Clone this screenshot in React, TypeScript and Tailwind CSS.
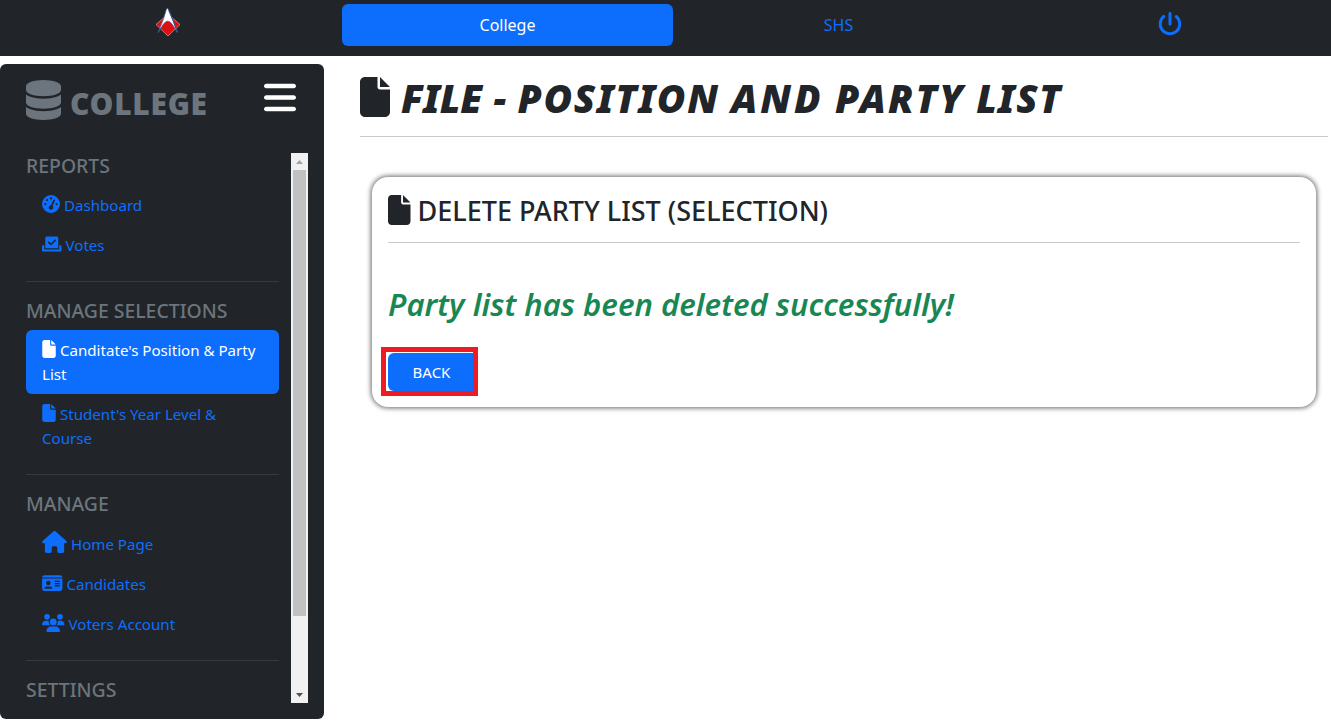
import type { ReactNode } from "react";
import {
  FaBars,
  FaCheckToSlot,
  FaDatabase,
  FaFile,
  FaGaugeHigh,
  FaHouse,
  FaIdCard,
  FaPowerOff,
  FaUsers,
} from "react-icons/fa6";

function Logo() {
  return (
    <svg viewBox="0 0 26 30" className="h-[30px] w-[26px]">
      <path d="M13 6 L25 16.500 L13 28 L1 16.500 Z" fill="#dc1010" stroke="#d9b9b9" strokeWidth="0.600" />
      <path
        d="M11.500 1 Q12.300 0 13.300 1 L18.500 13.500 L22.500 24.500 L17.500 16.500 Q12.800 9.500 8 16.500 L3.200 24.500 L8.500 11 Z"
        fill="#ffffff"
        stroke="#4a64a0"
        strokeWidth="0.600"
      />
      <path d="M13.500 1.500 L18.500 13.500 L22.500 24.500 M5.500 20 L3.200 24.500" fill="none" stroke="#33508c" strokeWidth="1.100" />
    </svg>
  );
}

function NavLink({ icon, label, active = false }: { icon: ReactNode; label: ReactNode; active?: boolean }) {
  return (
    <a
      className={
        active
          ? "block rounded-md bg-[#0d6efd] px-4 py-2 text-[15.1px] leading-6 text-white"
          : "block px-4 py-2 text-[15.1px] leading-6 text-[#0d6efd]"
      }
    >
      {icon}
      {label}
    </a>
  );
}

function Section({ title, children }: { title: string; children?: ReactNode }) {
  return (
    <section>
      <h5 className="mb-[7px] pt-px text-[19.4px] font-medium leading-6 text-[#6c757d] whitespace-nowrap">{title}</h5>
      {children}
    </section>
  );
}

function Divider() {
  return <hr className="my-4 border-t border-[#373b3f]" />;
}

function Scrollbar() {
  return (
    <div className="flex w-[17px] shrink-0 flex-col items-center bg-[#f1f1f1]">
      <div className="flex h-[17px] shrink-0 items-center">
        <svg viewBox="0 0 7 4" className="h-1 w-[7px]">
          <path d="M0 4 L3.500 0 L7 4 Z" fill="#a3a3a3" />
        </svg>
      </div>
      <div className="h-[446px] w-[13px] bg-[#c1c1c1]" />
      <div className="mt-auto flex h-[17px] shrink-0 items-center">
        <svg viewBox="0 0 7 4" className="h-1 w-[7px]">
          <path d="M0 0 L3.500 4 L7 0 Z" fill="#505050" />
        </svg>
      </div>
    </div>
  );
}

export default function App() {
  return (
    <div className="h-[728px] overflow-hidden bg-white font-['Noto_Sans',sans-serif] text-[#212529]">
      <nav className="grid h-14 grid-cols-[342px_331px_331px_327px] bg-[#212529] pt-1 text-[16px]">
        <div className="flex justify-center pr-[6px] pt-1">
          <Logo />
        </div>
        <a className="flex h-[42px] items-center justify-center rounded-md bg-[#0d6efd] text-white">College</a>
        <a className="flex h-[42px] items-center justify-center text-[#0d6efd]">SHS</a>
        <a className="flex justify-center pl-[5px] pt-2 text-[24px] text-[#0d6efd]">
          <FaPowerOff />
        </a>
      </nav>

      <div className="flex pt-2">
        <aside className="h-[655px] w-[324px] shrink-0 rounded-md bg-[#212529] pl-[26px] pr-4">
          <header className="flex h-[89px] justify-between pr-3 pt-4">
            <h1 className="flex gap-[9px] text-[#6c757d]">
              <FaDatabase className="h-10 w-[35px]" />
              <span className="pt-1 text-[30px] font-black leading-10 tracking-[0.7px]">COLLEGE</span>
            </h1>
            <FaBars className="mt-[-1px] h-[37px] w-8 text-white" />
          </header>
          <div className="flex h-[550px] gap-3 overflow-hidden">
            <div className="w-[253px] shrink-0">
              <Section title="REPORTS">
                <NavLink icon={<FaGaugeHigh className="mr-1 inline h-[18px] w-[18px] align-[-2px]" />} label="Dashboard" />
                <NavLink icon={<FaCheckToSlot className="mr-1 inline h-[18px] w-[19.500px] align-[-2px]" />} label="Votes" />
              </Section>
              <Divider />
              <Section title="MANAGE SELECTIONS">
                <NavLink
                  active
                  icon={<FaFile className="mr-1 inline h-[18px] w-3.5 align-[-2px]" />}
                  label="Canditate's Position & Party List"
                />
                <NavLink
                  icon={<FaFile className="mr-1 inline h-[18px] w-3.5 align-[-2px]" />}
                  label="Student's Year Level & Course"
                />
              </Section>
              <Divider />
              <Section title="MANAGE">
                <NavLink icon={<FaHouse className="mr-1 inline h-[22px] w-[25px] align-[-3px]" />} label="Home Page" />
                <NavLink icon={<FaIdCard className="mr-1 inline h-[18px] w-[20.500px] align-[-2px]" />} label="Candidates" />
                <NavLink icon={<FaUsers className="mr-1 inline h-[18px] w-[22.500px] align-[-2px]" />} label="Voters Account" />
              </Section>
              <Divider />
              <Section title="SETTINGS" />
            </div>
            <Scrollbar />
          </div>
        </aside>

        <main className="w-[1004px] pl-9">
          <div className="flex h-[72px] gap-[11px] pt-[13px]">
            <FaFile className="h-10 w-[30px]" />
            <h1 className="text-[39px] font-black italic leading-[41px] whitespace-nowrap [word-spacing:1px]">
              <span>FILE</span> <span>-</span> <span className="tracking-[1.7px]">POSITION</span>{" "}
              <span className="tracking-[3px]">AND</span> <span className="tracking-[2.2px]">PARTY</span>{" "}
              <span className="tracking-[1.4px]">LIST</span>
            </h1>
          </div>
          <hr className="border-t border-[#c8c9ca]" />
          <section className="ml-3 mt-10 h-[230px] w-[944px] rounded-2xl bg-white px-4 pt-4 shadow-[0_0_5px_1px_rgba(0,0,0,0.6)]">
            <div className="flex h-[49px] gap-[7px] pt-0.5">
              <FaFile className="h-[30px] w-[22.500px]" />
              <h3 className="text-[27px] font-medium leading-[32px] whitespace-nowrap">DELETE PARTY LIST (SELECTION)</h3>
            </div>
            <hr className="border-t border-[#c8c9ca]" />
            <p className="mt-10 text-[31px] font-semibold italic leading-[42px] text-[#198754] whitespace-nowrap">
              Party list has been deleted successfully!
            </p>
            <div className="ml-[-7px] mt-[22px] flex h-[49px] w-[97px] border-[5px] border-[#ed1c24] pl-0.5 pt-px">
              <button className="h-[38px] w-full rounded-l-md bg-[#0d6efd] pl-0.5 text-[15px] text-white">BACK</button>
            </div>
          </section>
        </main>
      </div>
    </div>
  );
}
